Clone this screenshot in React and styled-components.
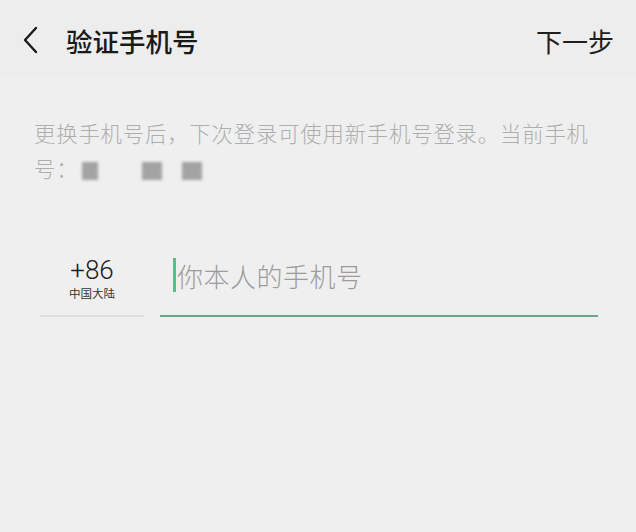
import React, { useState } from "react";
import styled, { createGlobalStyle } from "styled-components";

const GlobalStyle = createGlobalStyle`
  html, body {
    margin: 0;
    padding: 0;
    background: #efefef;
  }
  body {
    font-family: "Noto Sans CJK SC", "Noto Sans", sans-serif;
    -webkit-font-smoothing: antialiased;
  }
`;

const Page = styled.div`
  width: 636px;
  height: 532px;
  background: #efefef;
  overflow: hidden;
`;

const TopBar = styled.div`
  height: 78px;
  display: flex;
  align-items: center;
  padding: 2px 22px 0 22px;
  background: #ededed;
  box-sizing: border-box;
`;

const BackButton = styled.button`
  width: 20px;
  height: 30px;
  padding: 0;
  border: 0;
  background: none;
  display: flex;
  align-items: center;
  cursor: pointer;
`;

const Title = styled.h1`
  margin: 0 0 0 24px;
  font-size: 26.5px;
  font-weight: 500;
  color: #1a1a1a;
  flex: 1;
`;

const NextLink = styled.span`
  font-size: 26px;
  color: #1e1e1e;
`;

const Hint = styled.p`
  margin: 0;
  padding: 37px 30px 0 34px;
  font-size: 21.4px;
  font-weight: 300;
  line-height: 35px;
  letter-spacing: 0.8px;
  color: #aeaeae;
`;

const Masked = styled.span`
  display: inline-block;
  width: ${({ $w }) => $w}px;
  height: 18px;
  margin-left: ${({ $gap }) => $gap}px;
  vertical-align: -3px;
  background: #a3a3a3;
  filter: blur(1.5px);
`;

const PhoneRow = styled.div`
  display: flex;
  align-items: flex-end;
  gap: 16px;
  padding: 70px 38px 0 40px;
`;

const CountryCode = styled.div`
  width: 104px;
  height: 62px;
  display: flex;
  flex-direction: column;
  align-items: center;
  border-bottom: 2px solid #dedede;
  box-sizing: border-box;
`;

const Code = styled.span`
  font-family: "Roboto", "Noto Sans", sans-serif;
  font-size: 26px;
  font-weight: 300;
  line-height: 30px;
  color: #1c1c1c;
`;

const Region = styled.span`
  font-size: 11.5px;
  line-height: 16px;
  color: #333;
`;

const InputWrap = styled.label`
  flex: 1;
  height: 62px;
  display: flex;
  align-items: center;
  border-bottom: 2px solid #67a88b;
  box-sizing: border-box;
  padding-left: 13px;
  padding-bottom: 20px;
`;

const Caret = styled.span`
  width: 3px;
  height: 34px;
  background: #5cbd8c;
  margin-right: 1px;
`;

const PhoneInput = styled.input`
  flex: 1;
  border: 0;
  outline: 0;
  background: transparent;
  padding: 0;
  font-family: "Noto Sans CJK SC", "Noto Sans", sans-serif;
  font-size: 26px;
  font-weight: 300;
  color: #222;
  caret-color: transparent;

  &::placeholder {
    color: #9c9c9c;
    letter-spacing: 0.5px;
  }
`;

export default function App() {
  const [phone, setPhone] = useState("");

  return (
    <Page>
      <GlobalStyle />
      <TopBar>
        <BackButton aria-label="返回">
          <svg width="16" height="28" viewBox="0 0 16 28" fill="none">
            <path d="M14 2 L3 14 L14 26" stroke="#1a1a1a" strokeWidth="2.4" strokeLinecap="round" strokeLinejoin="round" />
          </svg>
        </BackButton>
        <Title>验证手机号</Title>
        <NextLink>下一步</NextLink>
      </TopBar>

      <Hint>
        更换手机号后，下次登录可使用新手机号登录。当前手机号：
        <Masked $w={16} $gap={4} />
        <Masked $w={20} $gap={44} />
        <Masked $w={20} $gap={20} />
      </Hint>

      <PhoneRow>
        <CountryCode>
          <Code>+86</Code>
          <Region>中国大陆</Region>
        </CountryCode>
        <InputWrap>
          {phone === "" && <Caret />}
          <PhoneInput
            value={phone}
            onChange={(e) => setPhone(e.target.value)}
            placeholder="你本人的手机号"
          />
        </InputWrap>
      </PhoneRow>
    </Page>
  );
}
